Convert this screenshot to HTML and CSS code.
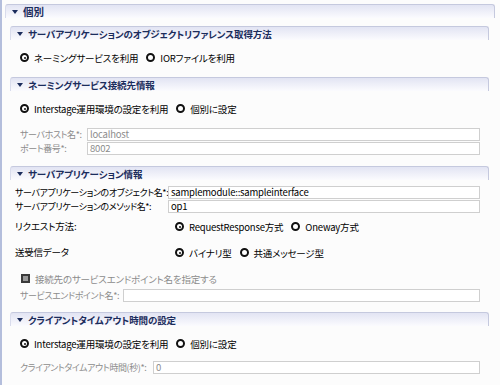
FILE: index.html
```html
<!DOCTYPE html>
<html lang="ja">
<head>
    <meta charset="UTF-8">
    <meta name="viewport" content="width=device-width, initial-scale=1.0">
    <title>個別</title>
    <link rel="stylesheet" href="styles.css">
</head>
<body>
    <div class="page">
        <!-- top section -->
        <div class="bar bar-top"><span class="twisty"></span>個別</div>

        <!-- object reference -->
        <div class="sub sub-ref">
            <div class="bar"><span class="twisty"></span>サーバアプリケーションのオブジェクトリファレンス取得方法</div>
            <div class="radios radios-ref">
                <span class="opt"><span class="radio checked"></span>ネーミングサービスを利用</span>
                <span class="opt"><span class="radio"></span>IORファイルを利用</span>
            </div>
        </div>

        <!-- naming service -->
        <div class="sub sub-naming">
            <div class="bar"><span class="twisty"></span>ネーミングサービス接続先情報</div>
            <div class="radios radios-naming">
                <span class="opt"><span class="radio checked"></span>Interstage運用環境の設定を利用</span>
                <span class="opt"><span class="radio"></span>個別に設定</span>
            </div>
            <div class="fields fields-naming">
                <label class="lbl dim">サーバホスト名*:</label>
                <div class="input dim">localhost</div>
                <label class="lbl dim">ポート番号*:</label>
                <div class="input dim">8002</div>
            </div>
        </div>

        <!-- server application -->
        <div class="sub sub-app">
            <div class="bar"><span class="twisty"></span>サーバアプリケーション情報</div>
            <div class="fields fields-app">
                <label class="lbl">サーバアプリケーションのオブジェクト名*:</label>
                <div class="input">samplemodule::sampleinterface</div>
                <label class="lbl">サーバアプリケーションのメソッド名*:</label>
                <div class="input">op1</div>
            </div>
            <div class="choice choice-req">
                <span class="lbl">リクエスト方法:</span>
                <div class="radios">
                    <span class="opt"><span class="radio checked"></span>RequestResponse方式</span>
                    <span class="opt"><span class="radio"></span>Oneway方式</span>
                </div>
            </div>
            <div class="choice choice-data">
                <span class="lbl">送受信データ</span>
                <div class="radios">
                    <span class="opt"><span class="radio checked"></span>バイナリ型</span>
                    <span class="opt"><span class="radio"></span>共通メッセージ型</span>
                </div>
            </div>
            <div class="check-row">
                <span class="checkbox"></span>接続先のサービスエンドポイント名を指定する
            </div>
            <div class="fields fields-endpoint">
                <label class="lbl dim">サービスエンドポイント名*:</label>
                <div class="input"></div>
            </div>
        </div>

        <!-- client timeout -->
        <div class="sub sub-timeout">
            <div class="bar"><span class="twisty"></span>クライアントタイムアウト時間の設定</div>
            <div class="radios radios-timeout">
                <span class="opt"><span class="radio checked"></span>Interstage運用環境の設定を利用</span>
                <span class="opt"><span class="radio"></span>個別に設定</span>
            </div>
            <div class="fields fields-timeout">
                <label class="lbl dim">クライアントタイムアウト時間(秒)*:</label>
                <div class="input dim">0</div>
            </div>
        </div>
    </div>
</body>
</html>
```

FILE: styles.css
```css
html, body {
    margin: 0;
    height: 100%;
}

body {
    font-family: "Noto Sans CJK JP", "Noto Sans", sans-serif;
    font-size: 9.5px;
    font-feature-settings: "palt";
    letter-spacing: -0.2px;
    color: #000;
    background-color: #fcfcfc;
    border-left: 2px solid #b4bedc;
    box-sizing: border-box;
}

.page {
    padding: 4px 5px 0 3px;
}

/* section title bars */
.bar {
    display: flex;
    align-items: center;
    height: 13px;
    padding-left: 6px;
    font-weight: bold;
    font-size: 9.5px;
    letter-spacing: -0.1px;
    color: #1b2c5c;
    white-space: nowrap;
    background: linear-gradient(to bottom, #e2e4f3, #fbfbfe);
    border: 1px solid #c5c9de;
    border-bottom: none;
    border-left-color: #d9dcec;
    border-radius: 3px 3px 0 0;
}

.bar-top {
    font-size: 10.5px;
}

.twisty {
    width: 0;
    height: 0;
    border-left: 3px solid transparent;
    border-right: 3px solid transparent;
    border-top: 4px solid #1b2c5c;
    margin-right: 5px;
}

.sub {
    margin: 0 6px 0 5px;
}

.sub-ref { margin-top: 8px; }
.sub-naming { margin-top: 13px; }
.sub-app { margin-top: 11px; }
.sub-timeout { margin-top: 10px; }

/* radio groups */
.radios {
    display: flex;
    align-items: center;
    gap: 8px;
    height: 13px;
    white-space: nowrap;
}

.radios-ref,
.radios-naming,
.radios-timeout {
    margin: 11px 0 0 10px;
}

.opt {
    display: flex;
    align-items: center;
}

.radio {
    position: relative;
    width: 9px;
    height: 9px;
    border: 2px solid #111;
    border-radius: 50%;
    box-sizing: border-box;
    background: #fff;
    margin-right: 5px;
}

.radio.checked::after {
    content: "";
    position: absolute;
    left: 1.5px;
    top: 1.5px;
    width: 2px;
    height: 2px;
    border-radius: 50%;
    background: #111;
}

/* label + input rows */
.fields {
    display: grid;
    row-gap: 1px;
    padding: 0 9px 0 5px;
    align-items: center;
}

.fields .lbl {
    font-size: 9px;
    letter-spacing: -0.4px;
    overflow: hidden;
}

.fields-naming {
    grid-template-columns: 67px 1fr;
    margin-top: 13px;
    padding-left: 10px;
}

.fields-app {
    grid-template-columns: 153px 1fr;
    margin-top: 6px;
}

.fields-endpoint {
    grid-template-columns: 103px 1fr;
    margin-top: 4px;
    padding-left: 10px;
}

.fields-timeout {
    grid-template-columns: 133px 1fr;
    margin-top: 11px;
    padding-left: 10px;
}

.lbl {
    white-space: nowrap;
    line-height: 13px;
}

.dim {
    color: #8c8c8c;
}

.input {
    height: 13px;
    line-height: 11px;
    padding: 0 2px;
    border: 1px solid #cfcfcf;
    background: #fff;
    box-sizing: border-box;
    white-space: nowrap;
    overflow: hidden;
}

.choice {
    display: flex;
    align-items: center;
    padding-left: 5px;
}

.choice .lbl {
    width: 160px;
}

.choice-req { margin-top: 7px; }
.choice-data { margin-top: 13px; }

.check-row {
    display: flex;
    align-items: center;
    height: 13px;
    margin: 13px 0 0 11px;
    color: #8c8c8c;
}

.checkbox {
    width: 9px;
    height: 9px;
    border: 2px solid #3a3a3a;
    background: #9a9a9a;
    box-sizing: border-box;
    margin-right: 5px;
}
```
